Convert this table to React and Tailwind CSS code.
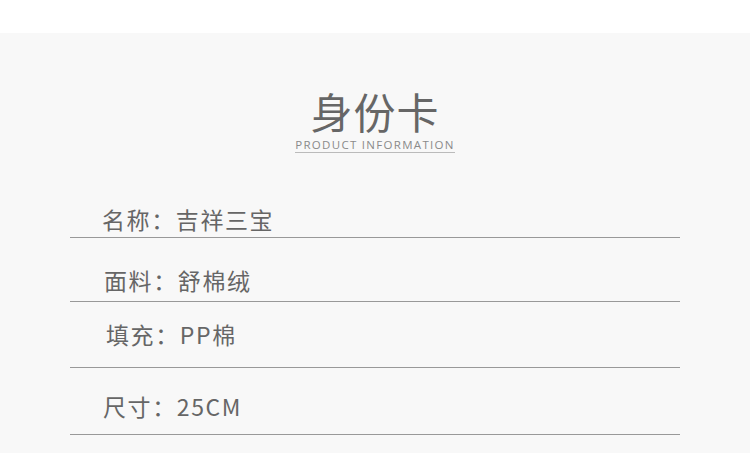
import React from "react";

const rows = [
  { label: "名称：", value: "吉祥三宝", cls: "pt-0 pb-[6px] pl-[32px]" },
  { label: "面料：", value: "舒棉绒", cls: "pt-[30px] pb-[9px] pl-[34px]" },
  { label: "填充：", value: "PP棉", cls: "pt-[20px] pb-[21px] pl-[36px]" },
  { label: "尺寸：", value: "25CM", cls: "pt-[26px] pb-[16px] pl-[33px]" },
];

function App() {
  return (
    <div
      className="w-[750px] h-[453px] overflow-hidden bg-white"
      style={{ fontFamily: '"Noto Sans CJK SC", "Noto Sans", sans-serif' }}
    >
      <div className="h-[33px] bg-white" />
      <div className="h-[420px] bg-[#f8f8f8] flex flex-col">
        <div className="mt-[58px] flex flex-col items-center">
          <h1 className="text-[42px] leading-[40px] text-[#666] tracking-[1px]">身份卡</h1>
          <div className="mt-[8px] border-b border-[#bbb] pb-[1px]">
            <p
              className="text-[11.5px] leading-[12px] tracking-[1.3px] text-[#8a8a8a]"
              style={{ fontFamily: '"Open Sans", "Noto Sans", sans-serif' }}
            >
              PRODUCT INFORMATION
            </p>
          </div>
        </div>
        <div className="mx-[70px] mt-[54px]">
          {rows.map((r) => (
            <div key={r.label} className={`border-b border-[#999] ${r.cls}`}>
              <p className="text-[23px] leading-[24px] tracking-[1.6px] text-[#666]">
                {r.label}
                {r.value}
              </p>
            </div>
          ))}
        </div>
      </div>
    </div>
  );
}

export default App;
